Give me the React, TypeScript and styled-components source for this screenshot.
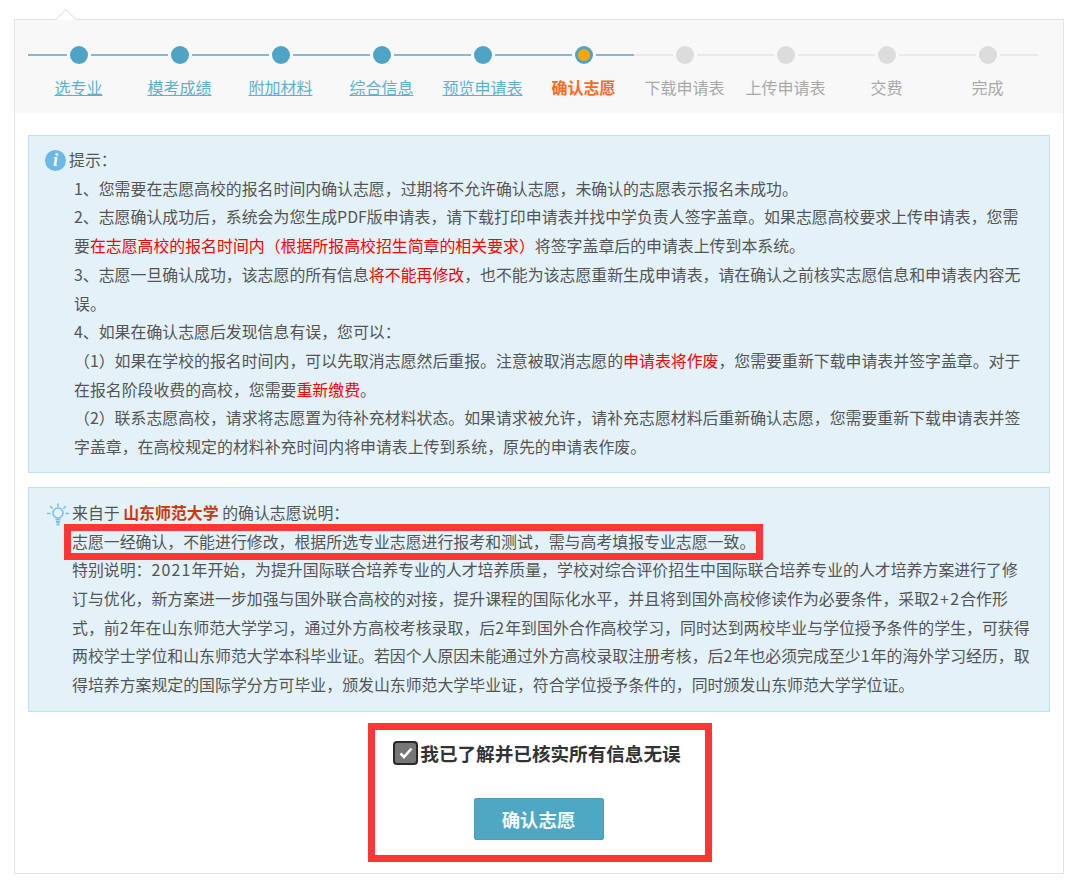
import styled, { createGlobalStyle } from "styled-components";

type StepState = "done" | "active" | "todo";

const steps: { label: string; state: StepState }[] = [
  { label: "选专业", state: "done" },
  { label: "模考成绩", state: "done" },
  { label: "附加材料", state: "done" },
  { label: "综合信息", state: "done" },
  { label: "预览申请表", state: "done" },
  { label: "确认志愿", state: "active" },
  { label: "下载申请表", state: "todo" },
  { label: "上传申请表", state: "todo" },
  { label: "交费", state: "todo" },
  { label: "完成", state: "todo" },
];

const GlobalStyle = createGlobalStyle`
  html, body {
    margin: 0;
    padding: 0;
    background: #fff;
  }
  body {
    font-family: "Noto Sans CJK SC", "Liberation Sans", sans-serif;
  }
  * {
    box-sizing: border-box;
  }
`;

const Page = styled.div`
  width: 1080px;
  height: 883px;
  padding: 19px 16px 9px 14px;
  overflow: hidden;
`;

const Panel = styled.div`
  position: relative;
  height: 855px;
  border: 1px solid #e4e4e4;

  &::before {
    content: "";
    position: absolute;
    left: 43px;
    top: -8px;
    width: 15px;
    height: 15px;
    background: #fff;
    border-left: 1px solid #e4e4e4;
    border-top: 1px solid #e4e4e4;
    transform: rotate(45deg);
  }
`;

const StepBar = styled.div`
  position: relative;
  display: grid;
  grid-template-columns: repeat(10, 101px);
  height: 93px;
  padding: 26px 12px 0 13px;
  background: #f8f8f8;
`;

const Step = styled.div`
  display: flex;
  flex-direction: column;
  align-items: center;
`;

const Track = styled.div`
  display: flex;
  align-items: center;
  gap: 3px;
  width: 100%;
  height: 18px;
`;

const TrackLine = styled.span<{ $on: boolean }>`
  flex: 1;
  height: 2px;
  background: ${(p) => (p.$on ? "#7fbbd2" : "#e9e9e9")};
`;

const Dot = styled.span<{ $state: StepState }>`
  width: 18px;
  height: 18px;
  border-radius: 50%;
  background: ${(p) =>
    p.$state === "done" ? "#4fa3c4" : p.$state === "active" ? "#fca600" : "#dcdcdc"};
  border: ${(p) => (p.$state === "active" ? "3px solid #4fa3c4" : "none")};
`;

const StepLabel = styled.span<{ $state: StepState }>`
  margin-top: 11px;
  font-size: 16px;
  line-height: 24px;
  white-space: nowrap;
  color: ${(p) =>
    p.$state === "done" ? "#5fb0cf" : p.$state === "active" ? "#ff6a1c" : "#a9a9a9"};
  font-weight: ${(p) => (p.$state === "active" ? 700 : 400)};
  text-decoration: ${(p) => (p.$state === "done" ? "underline" : "none")};
`;

const Body = styled.div`
  display: flex;
  flex-direction: column;
  padding: 22px 13px 0;
`;

const NoticeBox = styled.div<{ $pad: string }>`
  padding: ${(p) => p.$pad};
  margin-bottom: 14px;
  background: #e3f1f8;
  border: 1px solid #bfe3ee;
  color: #555;
  font-size: 15.9px;
  line-height: 28.7px;
`;

const TitleRow = styled.div<{ $indent: number }>`
  display: flex;
  align-items: center;
  gap: 3px;
  margin-left: ${(p) => p.$indent}px;
  white-space: nowrap;
`;

const IconCircle = styled.span`
  display: flex;
  align-items: center;
  justify-content: center;
  width: 21px;
  height: 21px;
  border-radius: 50%;
  background: #6db8e6;
  color: #fff;
  font-family: "Liberation Serif", serif;
  font-size: 18px;
  font-style: italic;
  font-weight: 700;
  line-height: 21px;
`;

const BulbIcon = styled.svg`
  flex: none;
  width: 22px;
  height: 23px;
  margin-top: 2px;
`;

const Para = styled.p`
  margin: 0;
`;

const Num = styled.span`
  letter-spacing: 1.2px;
`;

const Warn = styled.span`
  color: #f00;
`;

const School = styled.strong`
  color: #c9390c;
  font-weight: 700;
`;

const HighlightLine = styled.div`
  width: 685px;
  height: 22px;
  margin: 3.35px 0 3.35px -1px;
  padding-left: 1px;
  outline: 7px solid #ff3636;
  line-height: 22px;
  white-space: nowrap;
`;

const ConfirmBox = styled.div`
  align-self: center;
  display: flex;
  flex-direction: column;
  align-items: center;
  width: 344px;
  height: 139px;
  margin-top: -3px;
  margin-left: 1px;
  padding-top: 10px;
  border: 7px solid #ff3636;
`;

const Agree = styled.label`
  display: flex;
  align-items: center;
  gap: 2px;
  margin-right: 5px;
  font-size: 18.6px;
  font-weight: 700;
  line-height: 26px;
  color: #333;
  white-space: nowrap;
`;

const CheckMark = styled.span`
  display: flex;
  align-items: center;
  justify-content: center;
  width: 25px;
  height: 24px;
  border: 2px solid #2a2a2a;
  border-radius: 4px;
  background: #767676;
`;

const SubmitButton = styled.button`
  width: 130px;
  height: 42px;
  margin-top: 32px;
  margin-right: 2px;
  padding: 0;
  border: 1px solid #4aa0bb;
  border-radius: 2px;
  background: #4fa8c3;
  color: #f4f9fb;
  font-family: inherit;
  font-size: 18.4px;
  font-weight: 700;
  line-height: 40px;
`;

export default function App() {
  return (
    <>
      <GlobalStyle />
      <Page>
        <Panel>
          <StepBar>
            {steps.map((s) => (
              <Step key={s.label}>
                <Track>
                  <TrackLine $on={s.state !== "todo"} />
                  <Dot $state={s.state} />
                  <TrackLine $on={s.state !== "todo"} />
                </Track>
                <StepLabel $state={s.state}>{s.label}</StepLabel>
              </Step>
            ))}
          </StepBar>
          <Body>
            <NoticeBox $pad="10px 20px 10px 45px">
              <TitleRow $indent={-29}>
                <IconCircle>i</IconCircle>
                提示：
              </TitleRow>
              <Para>1、您需要在志愿高校的报名时间内确认志愿，过期将不允许确认志愿，未确认的志愿表示报名未成功。</Para>
              <Para>
                2、志愿确认成功后，系统会为您生成PDF版申请表，请下载打印申请表并找中学负责人签字盖章。如果志愿高校要求上传申请表，您需要
                <Warn>在志愿高校的报名时间内（根据所报高校招生简章的相关要求）</Warn>
                将签字盖章后的申请表上传到本系统。
              </Para>
              <Para>
                3、志愿一旦确认成功，该志愿的所有信息<Warn>将不能再修改</Warn>
                ，也不能为该志愿重新生成申请表，请在确认之前核实志愿信息和申请表内容无误。
              </Para>
              <Para>4、如果在确认志愿后发现信息有误，您可以：</Para>
              <Para>
                （1）如果在学校的报名时间内，可以先取消志愿然后重报。注意被取消志愿的<Warn>申请表将作废</Warn>
                ，您需要重新下载申请表并签字盖章。对于在报名阶段收费的高校，您需要<Warn>重新缴费</Warn>。
              </Para>
              <Para>
                （2）联系志愿高校，请求将志愿置为待补充材料状态。如果请求被允许，请补充志愿材料后重新确认志愿，您需要重新下载申请表并签字盖章，在高校规定的材料补充时间内将申请表上传到系统，原先的申请表作废。
              </Para>
            </NoticeBox>
            <NoticeBox $pad="11px 15.5px 11px 43px">
              <TitleRow $indent={-25}>
                <BulbIcon viewBox="0 0 22 23" fill="none" stroke="#7cc0ea" strokeWidth="1.6">
                  <circle cx="11" cy="10" r="5" />
                  <path d="M8.5 16.5h5M9 19h4M9.5 21.5h3" strokeWidth="1.8" />
                  <path d="M11 1v2.2M3.5 3.5l1.6 1.6M18.5 3.5l-1.6 1.6M.5 10.5h2.4M19 10.5h2.5" strokeLinecap="round" />
                </BulbIcon>
                <span>
                  来自于 <School>山东师范大学</School> 的确认志愿说明：
                </span>
              </TitleRow>
              <HighlightLine>志愿一经确认，不能进行修改，根据所选专业志愿进行报考和测试，需与高考填报专业志愿一致。</HighlightLine>
              <Para>
                特别说明：<Num>2021</Num>年开始，为提升国际联合培养专业的人才培养质量，学校对综合评价招生中国际联合培养专业的人才培养方案进行了修订与优化，新方案进一步加强与国外联合高校的对接，提升课程的国际化水平，并且将到国外高校修读作为必要条件，采取<Num>2+2</Num>合作形式，前<Num>2</Num>年在山东师范大学学习，通过外方高校考核录取，后<Num>2</Num>年到国外合作高校学习，同时达到两校毕业与学位授予条件的学生，可获得两校学士学位和山东师范大学本科毕业证。若因个人原因未能通过外方高校录取注册考核，后<Num>2</Num>年也必须完成至少<Num>1</Num>年的海外学习经历，取得培养方案规定的国际学分方可毕业，颁发山东师范大学毕业证，符合学位授予条件的，同时颁发山东师范大学学位证。
              </Para>
            </NoticeBox>
            <ConfirmBox>
              <Agree>
                <CheckMark>
                  <svg width="14" height="12" viewBox="0 0 14 12" fill="none" stroke="#fff" strokeWidth="2.6">
                    <path d="M1.5 6.5l3.5 3.5 7.5-8.5" />
                  </svg>
                </CheckMark>
                我已了解并已核实所有信息无误
              </Agree>
              <SubmitButton>确认志愿</SubmitButton>
            </ConfirmBox>
          </Body>
        </Panel>
      </Page>
    </>
  );
}
